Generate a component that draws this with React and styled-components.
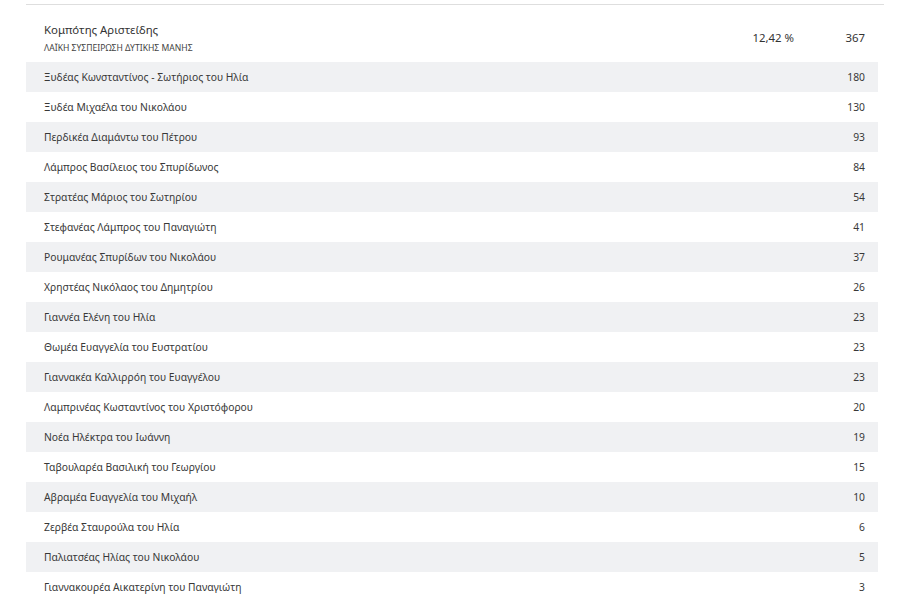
import React from "react";
import styled, { createGlobalStyle } from "styled-components";

const Global = createGlobalStyle`
  html, body { margin: 0; padding: 0; background: #fff; }
  body { font-family: "Noto Sans", "Open Sans", Arial, sans-serif; color: #333; }
`;

const Page = styled.div`
  padding: 4px 13px 0 26px;
  width: 897px;
  box-sizing: border-box;
`;

const Header = styled.div`
  border-top: 1px solid #dedede;
  display: flex;
  align-items: flex-start;
  padding: 16px 19px 6px 18px;
  height: 58px;
  box-sizing: border-box;
`;

const HeaderInfo = styled.div`
  flex: 1;
  display: flex;
  flex-direction: column;
`;

const Name = styled.div`
  font-size: 11.4px;
  line-height: 18px;
  color: #333;
`;

const Party = styled.div`
  font-size: 8.6px;
  line-height: 12px;
  margin-top: 3px;
  color: #444;
`;

const Percent = styled.div`
  font-size: 11.4px;
  line-height: 18px;
  margin-top: 8px;
  width: 100px;
  text-align: right;
`;

const Total = styled.div`
  font-size: 11.4px;
  line-height: 18px;
  margin-top: 8px;
  width: 71px;
  text-align: right;
`;

const List = styled.div`
  margin-right: 6px;
  display: flex;
  flex-direction: column;
`;

const Row = styled.div`
  height: 30px;
  display: flex;
  align-items: center;
  justify-content: space-between;
  padding: 0 13px 0 18px;
  font-size: 10.3px;
  color: #383838;
  background: ${(p) => (p.$striped ? "#f0f1f3" : "#fff")};
`;

const Label = styled.span``;
const Votes = styled.span``;

const rows = [
  ["Ξυδέας Κωνσταντίνος - Σωτήριος του Ηλία", 180],
  ["Ξυδέα Μιχαέλα του Νικολάου", 130],
  ["Περδικέα Διαμάντω του Πέτρου", 93],
  ["Λάμπρος Βασίλειος του Σπυρίδωνος", 84],
  ["Στρατέας Μάριος του Σωτηρίου", 54],
  ["Στεφανέας Λάμπρος του Παναγιώτη", 41],
  ["Ρουμανέας Σπυρίδων του Νικολάου", 37],
  ["Χρηστέας Νικόλαος του Δημητρίου", 26],
  ["Γιαννέα Ελένη του Ηλία", 23],
  ["Θωμέα Ευαγγελία του Ευστρατίου", 23],
  ["Γιαννακέα Καλλιρρόη του Ευαγγέλου", 23],
  ["Λαμπρινέας Κωσταντίνος του Χριστόφορου", 20],
  ["Νοέα Ηλέκτρα του Ιωάννη", 19],
  ["Ταβουλαρέα Βασιλική του Γεωργίου", 15],
  ["Αβραμέα Ευαγγελία του Μιχαήλ", 10],
  ["Ζερβέα Σταυρούλα του Ηλία", 6],
  ["Παλιατσέας Ηλίας του Νικολάου", 5],
  ["Γιαννακουρέα Αικατερίνη του Παναγιώτη", 3],
];

export default function App() {
  return (
    <>
      <Global />
      <Page>
        <Header>
          <HeaderInfo>
            <Name>Κομπότης Αριστείδης</Name>
            <Party>ΛΑΪΚΗ ΣΥΣΠΕΙΡΩΣΗ ΔΥΤΙΚΗΣ ΜΑΝΗΣ</Party>
          </HeaderInfo>
          <Percent>12,42 %</Percent>
          <Total>367</Total>
        </Header>
        <List>
          {rows.map(([n, v], i) => (
            <Row key={i} $striped={i % 2 === 0}>
              <Label>{n}</Label>
              <Votes>{v}</Votes>
            </Row>
          ))}
        </List>
      </Page>
    </>
  );
}
